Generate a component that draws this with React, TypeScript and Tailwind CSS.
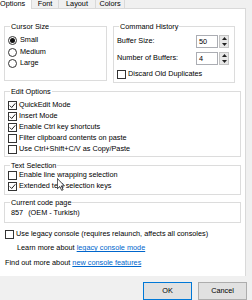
import React from "react";

const Check = ({ checked }: { checked?: boolean }) => (
  <span className="w-[9px] h-[9px] border border-[#333333] bg-white flex items-center justify-center shrink-0">
    {checked && (
      <svg width="7" height="7" viewBox="0 0 7 7">
        <path d="M0.7 3.5 L2.7 5.5 L6.3 1.3" fill="none" stroke="#222222" strokeWidth="1" />
      </svg>
    )}
  </span>
);

const Radio = ({ checked }: { checked?: boolean }) => (
  <span className="w-[9px] h-[9px] rounded-full border border-[#333333] bg-white flex items-center justify-center shrink-0">
    {checked && <span className="w-[5px] h-[5px] rounded-full bg-[#111111]" />}
  </span>
);

const Group = ({ label, className, children }: { label: string; className: string; children?: React.ReactNode }) => (
  <div className={`relative border border-[#dcdcdc] ${className}`}>
    <span className="absolute left-[5px] top-[-5px] bg-white px-[1px] leading-[9px]">{label}</span>
    {children}
  </div>
);

const Spin = ({ value }: { value: string }) => (
  <div className="flex h-[13px] w-[33px]">
    <div className="flex-1 flex items-center pl-[2px] border border-[#abadb3] bg-white leading-none">{value}</div>
    <div className="w-[10px] ml-[1px] flex flex-col border border-[#c4c4c4] bg-[#e8e8e8]">
      <div className="flex-1 flex items-center justify-center">
        <svg width="5" height="3" viewBox="0 0 5 3"><path d="M0 3 L2.5 0 L5 3 Z" fill="#222222" /></svg>
      </div>
      <div className="flex-1 flex items-center justify-center">
        <svg width="5" height="3" viewBox="0 0 5 3"><path d="M0 0 L2.5 3 L5 0 Z" fill="#222222" /></svg>
      </div>
    </div>
  </div>
);

const CheckRow = ({ checked, label, h }: { checked?: boolean; label: string; h: string }) => (
  <div className={`flex items-center gap-[2px] ${h}`}>
    <Check checked={checked} />
    <span className="whitespace-nowrap">{label}</span>
  </div>
);

export default function App() {
  return (
    <div className="w-[252px] h-[300px] bg-[#f0f0f0] overflow-hidden relative font-['Liberation_Sans',Arial,sans-serif] text-[7.3px] text-black">
      {/* tabs */}
      <div className="flex items-start h-[8px]">
        <div className="w-[32px] h-[9px] bg-white relative z-10 border-r border-[#d9d9d9] leading-[7px] whitespace-nowrap">Options</div>
        <div className="w-[27px] h-[8px] border-r border-[#d9d9d9] flex justify-center leading-[7px]">Font</div>
        <div className="w-[37px] h-[8px] border-r border-[#d9d9d9] flex justify-center leading-[7px]">Layout</div>
        <div className="w-[29px] h-[8px] border-r border-[#d9d9d9] flex justify-center leading-[7px]">Colors</div>
      </div>

      {/* panel */}
      <div className="w-[246px] h-[268px] bg-white border-t border-r border-[#d9d9d9] px-[4px] relative">
        <div className="flex items-start gap-[6px] mt-[17px]">
          <Group label="Cursor Size" className="w-[103px] h-[55px] pt-[8px] pl-[3px]">
            <div className="flex items-center gap-[3px] h-[11.5px]"><Radio checked /><span>Small</span></div>
            <div className="flex items-center gap-[3px] h-[11.5px]"><Radio /><span>Medium</span></div>
            <div className="flex items-center gap-[3px] h-[11.5px]"><Radio /><span>Large</span></div>
          </Group>
          <Group label="Command History" className="w-[122px] h-[57px] pt-[8px] pl-[3px] pr-[5px]">
            <div className="flex items-center justify-between h-[13px]">
              <span>Buffer Size:</span>
              <Spin value="50" />
            </div>
            <div className="flex items-center justify-between h-[13px] mt-[4px]">
              <span>Number of Buffers:</span>
              <Spin value="4" />
            </div>
            <div className="mt-[4px]">
              <CheckRow label="Discard Old Duplicates" h="h-[11px]" />
            </div>
          </Group>
        </div>

        <Group label="Edit Options" className="mt-[8px] h-[66px] pt-[8px] pl-[3px]">
          <CheckRow checked label="QuickEdit Mode" h="h-[11.1px]" />
          <CheckRow checked label="Insert Mode" h="h-[11.1px]" />
          <CheckRow checked label="Enable Ctrl key shortcuts" h="h-[11.1px]" />
          <CheckRow label="Filter clipboard contents on paste" h="h-[11.1px]" />
          <CheckRow label="Use Ctrl+Shift+C/V as Copy/Paste" h="h-[11.1px]" />
        </Group>

        <Group label="Text Selection" className="mt-[8px] h-[30px] pt-[3.5px] pl-[3px]">
          <CheckRow label="Enable line wrapping selection" h="h-[11.5px]" />
          <CheckRow checked label="Extended text selection keys" h="h-[11.5px]" />
        </Group>

        <Group label="Current code page" className="mt-[7px] h-[21px] pt-[5px] pl-[6px]">
          <div className="flex items-center h-[11px] whitespace-nowrap">
            <span>857</span>
            <span className="ml-[5px]">(OEM - Turkish)</span>
          </div>
        </Group>

        <div className="mt-[5.5px] pl-[1px]">
          <CheckRow label="Use legacy console (requires relaunch, affects all consoles)" h="h-[11px]" />
        </div>
        <div className="mt-[3.5px] pl-[13px] h-[11px] flex items-center whitespace-nowrap">
          <span>Learn more about&nbsp;</span>
          <span className="text-[#0066cc] underline">legacy console mode</span>
        </div>
        <div className="mt-[3.5px] pl-[1px] h-[11px] flex items-center whitespace-nowrap">
          <span>Find out more about&nbsp;</span>
          <span className="text-[#0066cc] underline">new console features</span>
        </div>

        {/* mouse pointer */}
        <svg className="absolute left-[57px] top-[169px]" width="8" height="13" viewBox="0 0 12 19">
          <path d="M0.5 0.5 L0.5 16 L4.2 12.5 L7 18.3 L9.2 17.3 L6.5 11.6 L11.2 11.6 Z" fill="#ffffff" stroke="#000000" strokeWidth="1.1" strokeLinejoin="round" />
        </svg>
      </div>

      {/* buttons */}
      <div className="flex justify-end gap-[6px] pr-[5px] mt-[6px]">
        <button className="w-[49px] h-[18px] border border-[#0078d7] bg-[#e1e1e1] flex items-center justify-center">OK</button>
        <button className="w-[49px] h-[18px] border border-[#adadad] bg-[#e1e1e1] flex items-center justify-center">Cancel</button>
      </div>
    </div>
  );
}
